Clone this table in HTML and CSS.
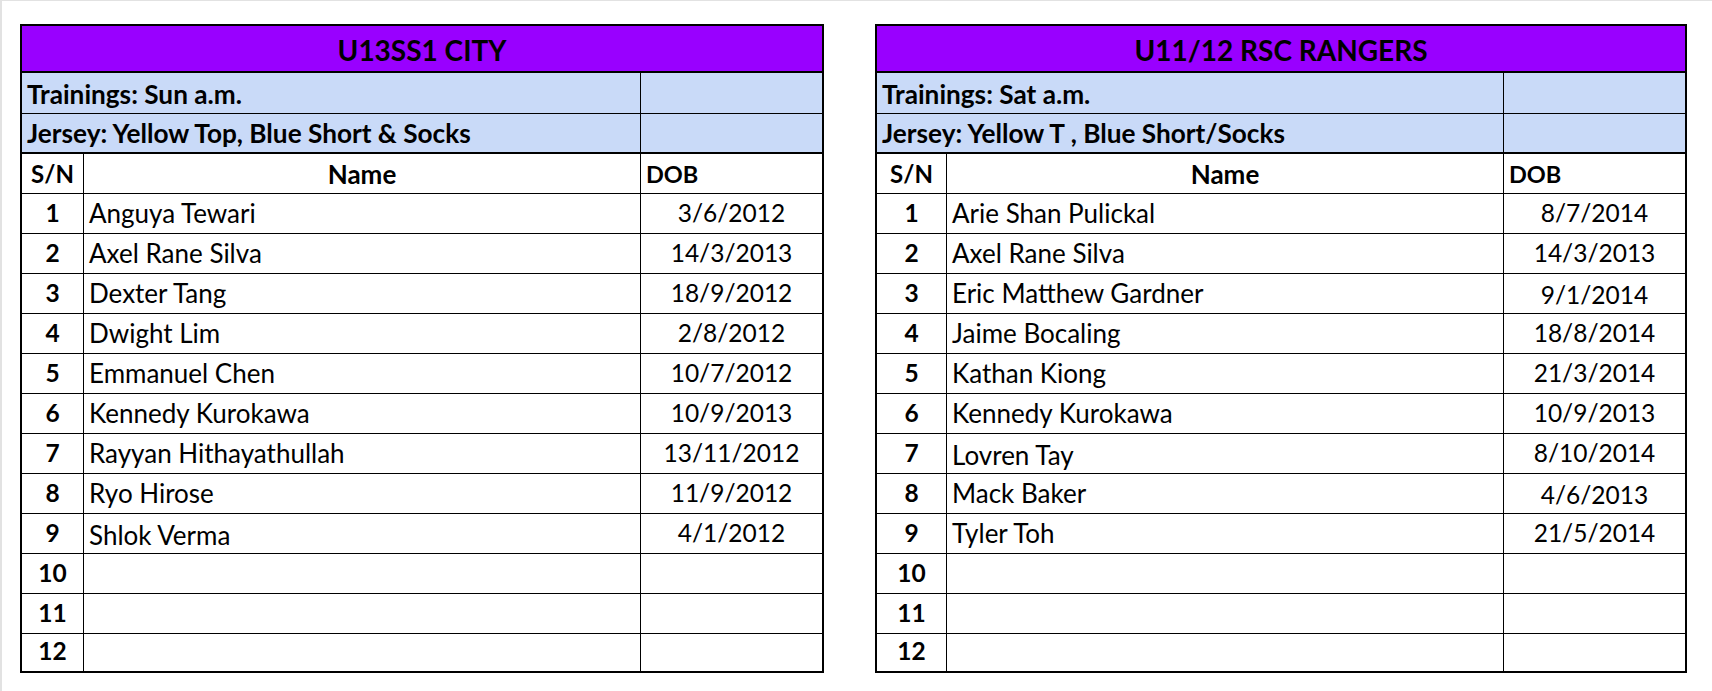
FILE: index.html
```html
<!DOCTYPE html>
<html>
<head>
<meta charset="utf-8">
<link rel="stylesheet" href="styles.css">
</head>
<body>
<div class="page">
  <div class="sheet sheet-a">
    <div class="cell title">U13SS1 CITY</div>
    <div class="cell info span2">Trainings: Sun a.m.</div>
    <div class="cell info last"></div>
    <div class="cell info span2 thick">Jersey: Yellow Top, Blue Short &amp; Socks</div>
    <div class="cell info last thick"></div>
    <div class="cell sn head">S/N</div>
    <div class="cell name head center">Name</div>
    <div class="cell dob head left">DOB</div>

    <div class="cell sn">1</div><div class="cell name">Anguya Tewari</div><div class="cell dob">3/6/2012</div>
    <div class="cell sn">2</div><div class="cell name">Axel Rane Silva</div><div class="cell dob">14/3/2013</div>
    <div class="cell sn">3</div><div class="cell name">Dexter Tang</div><div class="cell dob">18/9/2012</div>
    <div class="cell sn">4</div><div class="cell name">Dwight Lim</div><div class="cell dob">2/8/2012</div>
    <div class="cell sn">5</div><div class="cell name">Emmanuel Chen</div><div class="cell dob">10/7/2012</div>
    <div class="cell sn">6</div><div class="cell name">Kennedy Kurokawa</div><div class="cell dob">10/9/2013</div>
    <div class="cell sn">7</div><div class="cell name">Rayyan Hithayathullah</div><div class="cell dob">13/11/2012</div>
    <div class="cell sn">8</div><div class="cell name">Ryo Hirose</div><div class="cell dob">11/9/2012</div>
    <div class="cell sn">9</div><div class="cell name low">Shlok Verma</div><div class="cell dob">4/1/2012</div>
    <div class="cell sn">10</div><div class="cell name"></div><div class="cell dob"></div>
    <div class="cell sn">11</div><div class="cell name"></div><div class="cell dob"></div>
    <div class="cell sn end">12</div><div class="cell name end"></div><div class="cell dob end"></div>
  </div>

  <div class="sheet sheet-b">
    <div class="cell title">U11/12 RSC RANGERS</div>
    <div class="cell info span2">Trainings: Sat a.m.</div>
    <div class="cell info last"></div>
    <div class="cell info span2 thick">Jersey: Yellow T , Blue Short/Socks</div>
    <div class="cell info last thick"></div>
    <div class="cell sn head">S/N</div>
    <div class="cell name head center">Name</div>
    <div class="cell dob head left">DOB</div>

    <div class="cell sn">1</div><div class="cell name">Arie Shan Pulickal</div><div class="cell dob">8/7/2014</div>
    <div class="cell sn">2</div><div class="cell name">Axel Rane Silva</div><div class="cell dob">14/3/2013</div>
    <div class="cell sn">3</div><div class="cell name">Eric Matthew Gardner</div><div class="cell dob low">9/1/2014</div>
    <div class="cell sn">4</div><div class="cell name">Jaime Bocaling</div><div class="cell dob">18/8/2014</div>
    <div class="cell sn">5</div><div class="cell name">Kathan Kiong</div><div class="cell dob">21/3/2014</div>
    <div class="cell sn">6</div><div class="cell name">Kennedy Kurokawa</div><div class="cell dob">10/9/2013</div>
    <div class="cell sn">7</div><div class="cell name low">Lovren Tay</div><div class="cell dob">8/10/2014</div>
    <div class="cell sn">8</div><div class="cell name">Mack Baker</div><div class="cell dob low">4/6/2013</div>
    <div class="cell sn">9</div><div class="cell name">Tyler Toh</div><div class="cell dob">21/5/2014</div>
    <div class="cell sn">10</div><div class="cell name"></div><div class="cell dob"></div>
    <div class="cell sn">11</div><div class="cell name"></div><div class="cell dob"></div>
    <div class="cell sn end">12</div><div class="cell name end"></div><div class="cell dob end"></div>
  </div>
</div>
</body>
</html>
```

FILE: styles.css
```css
* { box-sizing: border-box; }
html, body { margin: 0; padding: 0; background: #ffffff; }
body {
  font-family: "Lato", "Liberation Sans", sans-serif;
  color: #000000;
  width: 1712px;
  height: 691px;
  overflow: hidden;
}
.page {
  height: 691px;
  border-top: 1px solid #e2e2e2;
  border-left: 2px solid #e2e2e2;
  padding: 23px 0 0 18px;
  display: flex;
  align-items: flex-start;
  gap: 51px;
}
.sheet {
  display: grid;
  border: 2px solid #000;
  grid-template-rows: 47px 41px 40px 40px repeat(11, 40px) 37px;
}
.sheet-a { grid-template-columns: 62px 557px 181px; }
.sheet-b { grid-template-columns: 70px 557px 181px; }

.cell {
  display: flex;
  align-items: flex-end;
  font-size: 24px;
  line-height: 24px;
  padding-bottom: 8px;
  border-bottom: 1px solid #000;
  white-space: nowrap;
  overflow: hidden;
}
.title {
  grid-column: 1 / 4;
  background: #9900ff;
  justify-content: center;
  font-weight: 700;
  font-size: 28px;
  border-bottom: 2px solid #000;
  padding-bottom: 9px;
}
.info {
  background: #c9daf8;
  font-weight: 700;
  font-size: 26.2px;
  padding-left: 5px;
  padding-bottom: 7px;
}
.span2 { grid-column: 1 / 3; border-right: 1px solid #000; }
.thick { border-bottom: 2px solid #000; }
.sn {
  justify-content: center;
  font-weight: 700;
  font-size: 24.5px;
  border-right: 1px solid #000;
}
.name {
  font-size: 26px;
  padding-left: 5px;
  border-right: 1px solid #000;
}
.dob { justify-content: center; font-size: 24.5px; }
.head { font-weight: 700; padding-bottom: 7px; }
.name.head { font-size: 26px; }
.dob.head { font-size: 23.5px; }
.sn.head { font-size: 24px; }
.center { justify-content: center; padding-left: 0; }
.left { justify-content: flex-start; padding-left: 5px; }
.low { padding-bottom: 6px; }
.end { border-bottom: none; }
```
